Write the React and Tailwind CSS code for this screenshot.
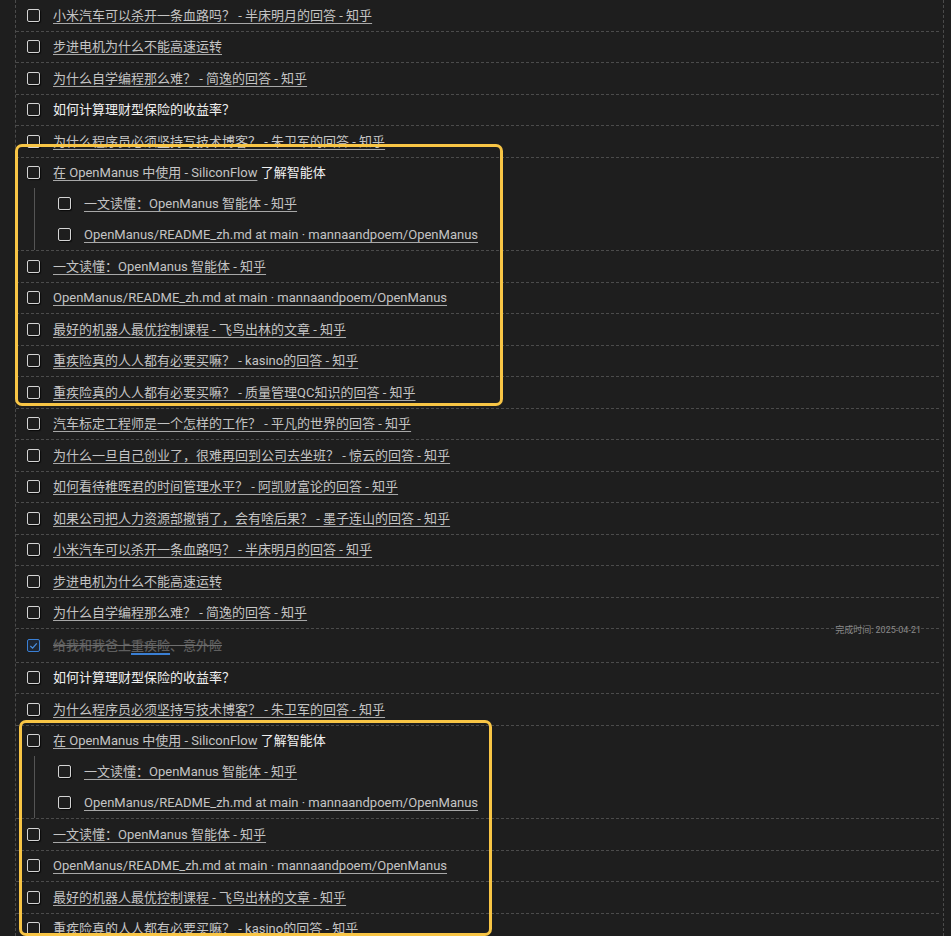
import React from "react";

const FONT = { fontFamily: "Roboto, 'Noto Sans CJK SC', 'Noto Sans', sans-serif" };

const rows = [
  { link: "小米汽车可以杀开一条血路吗？ - 半床明月的回答 - 知乎" },
  { link: "步进电机为什么不能高速运转" },
  { link: "为什么自学编程那么难？ - 简逸的回答 - 知乎" },
  { text: "如何计算理财型保险的收益率？" },
  { link: "为什么程序员必须坚持写技术博客？ - 朱卫军的回答 - 知乎" },
  {
    link: "在 OpenManus 中使用 - SiliconFlow",
    text: " 了解智能体",
    children: [
      { link: "一文读懂：OpenManus 智能体 - 知乎" },
      { link: "OpenManus/README_zh.md at main · mannaandpoem/OpenManus" },
    ],
  },
  { link: "一文读懂：OpenManus 智能体 - 知乎" },
  { link: "OpenManus/README_zh.md at main · mannaandpoem/OpenManus" },
  { link: "最好的机器人最优控制课程 - 飞鸟出林的文章 - 知乎" },
  { link: "重疾险真的人人都有必要买嘛？ - kasino的回答 - 知乎" },
  { link: "重疾险真的人人都有必要买嘛？ - 质量管理QC知识的回答 - 知乎" },
  { link: "汽车标定工程师是一个怎样的工作？ - 平凡的世界的回答 - 知乎" },
  { link: "为什么一旦自己创业了，很难再回到公司去坐班？ - 惊云的回答 - 知乎" },
  { link: "如何看待稚晖君的时间管理水平？ - 阿凯财富论的回答 - 知乎" },
  { link: "如果公司把人力资源部撤销了，会有啥后果？ - 墨子连山的回答 - 知乎" },
  { link: "小米汽车可以杀开一条血路吗？ - 半床明月的回答 - 知乎" },
  { link: "步进电机为什么不能高速运转" },
  { link: "为什么自学编程那么难？ - 简逸的回答 - 知乎" },
  { done: true },
  { text: "如何计算理财型保险的收益率？" },
  { link: "为什么程序员必须坚持写技术博客？ - 朱卫军的回答 - 知乎" },
  {
    link: "在 OpenManus 中使用 - SiliconFlow",
    text: " 了解智能体",
    children: [
      { link: "一文读懂：OpenManus 智能体 - 知乎" },
      { link: "OpenManus/README_zh.md at main · mannaandpoem/OpenManus" },
    ],
  },
  { link: "一文读懂：OpenManus 智能体 - 知乎" },
  { link: "OpenManus/README_zh.md at main · mannaandpoem/OpenManus" },
  { link: "最好的机器人最优控制课程 - 飞鸟出林的文章 - 知乎" },
  { link: "重疾险真的人人都有必要买嘛？ - kasino的回答 - 知乎" },
];

function Checkbox({ checked }) {
  if (checked) {
    return (
      <span className="grid h-[13px] w-[13px] shrink-0 place-items-center rounded-[2px] border-[1.5px] border-[#3a7fd4] bg-[#1d2633]">
        <svg viewBox="0 0 10 10" className="h-[9px] w-[9px]">
          <path d="M1.5 5.6 L4 7.9 L8.6 2.6" fill="none" stroke="#4a8fe0" strokeWidth="1.4" />
        </svg>
      </span>
    );
  }
  return <span className="h-[13px] w-[13px] shrink-0 rounded-[2px] border-[1.5px] border-[#d4d4d4] shadow-[1px_1px_1px_rgba(0,0,0,0.7)]" />;
}

function Label({ item }) {
  if (item.done) {
    return (
      <span className="font-medium text-[#5f5f5f] line-through decoration-[#6f6f6f]">
        给我和我爸上<span className="underline decoration-[#3a7fd4] decoration-[1.5px] underline-offset-[3px]">重疾险</span>、意外险
      </span>
    );
  }
  return (
    <span className="whitespace-nowrap">
      {item.link ? (
        <span className="text-[#c4c4c4] underline decoration-[#a8a8a8] underline-offset-[3px]">{item.link}</span>
      ) : null}
      {item.text ? <span className="whitespace-pre text-[#f0f0f0]">{item.text}</span> : null}
    </span>
  );
}

function Line({ item, sub }) {
  const h = sub ? "h-[31px] pl-[23px]" : item.done ? "h-[32.5px] pl-[11px]" : "h-[30.5px] pl-[11px]";
  return (
    <div className={`flex items-center ${h}`}>
      <Checkbox checked={item.done} />
      <span className="ml-[13px] leading-none">
        <Label item={item} />
      </span>
    </div>
  );
}

function Row({ item }) {
  return (
    <div className="relative border-b border-dashed border-[#4b4b4b]">
      <Line item={item} />
      {item.children ? (
        <div className="ml-[18px] border-l border-[#555]">
          {item.children.map((c, i) => (
            <Line key={i} item={c} sub />
          ))}
        </div>
      ) : null}
      {item.done ? (
        <span className="absolute top-[1px] right-[18px] -translate-y-1/2 text-[9px] leading-none text-[#8a8a8a]">
          完成时间: 2025-04-21
        </span>
      ) : null}
    </div>
  );
}

export default function App() {
  return (
    <div className="relative h-[936px] overflow-hidden bg-[#1e1e1e] text-[13px]" style={FONT}>
      <div className="ml-[15px] mr-[7px] h-full border-x border-dashed border-[#4b4b4b] pr-[4px]">
        {rows.map((item, i) => (
          <Row key={i} item={item} />
        ))}
      </div>
      <div className="pointer-events-none absolute left-[15px] top-[144px] h-[262px] w-[488px] rounded-[7px] border-[3px] border-[#f8c545]" />
      <div className="pointer-events-none absolute left-[19px] top-[720px] h-[216px] w-[473px] rounded-[7px] border-[3px] border-[#f8c545]" />
    </div>
  );
}
